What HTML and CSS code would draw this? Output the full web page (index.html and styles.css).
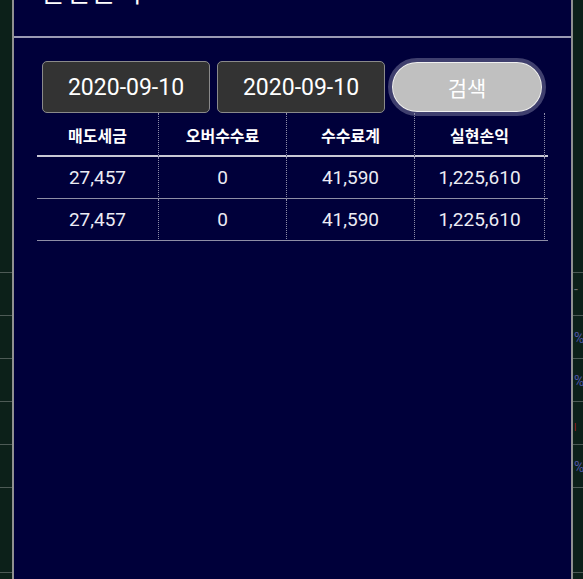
FILE: index.html
```html
<!DOCTYPE html>
<html lang="ko">
<head>
<meta charset="utf-8">
<link rel="stylesheet" href="styles.css">
</head>
<body>
<div class="screen">
  <div class="strip strip-left">
    <div class="cell tall"></div>
    <div class="cell"></div>
    <div class="cell"></div>
    <div class="cell"></div>
    <div class="cell"></div>
    <div class="cell"></div>
    <div class="cell big"></div>
  </div>
  <div class="modal">
    <div class="modal-head">
      <div class="title">실현손익</div>
    </div>
    <div class="modal-body">
      <div class="controls">
        <div class="date">2020-09-10</div>
        <div class="date date2">2020-09-10</div>
        <button class="search">검색</button>
      </div>
      <div class="table">
        <div class="th">매도세금</div>
        <div class="th">오버수수료</div>
        <div class="th">수수료계</div>
        <div class="th">실현손익</div>
        <div class="th end"></div>
        <div class="td">27,457</div>
        <div class="td">0</div>
        <div class="td">41,590</div>
        <div class="td">1,225,610</div>
        <div class="td end"></div>
        <div class="td">27,457</div>
        <div class="td">0</div>
        <div class="td">41,590</div>
        <div class="td">1,225,610</div>
        <div class="td end"></div>
      </div>
    </div>
  </div>
  <div class="strip strip-right">
    <div class="cell tall"></div>
    <div class="cell"><span class="mark grey">-</span></div>
    <div class="cell"><span class="mark">%</span></div>
    <div class="cell"><span class="mark">%</span></div>
    <div class="cell"><span class="mark red">|</span></div>
    <div class="cell"><span class="mark">%</span></div>
    <div class="cell big"></div>
  </div>
</div>
</body>
</html>
```
FILE: styles.css
```css
html, body {
  margin: 0;
  padding: 0;
  background: #0c2019;
  width: 583px;
  height: 579px;
  overflow: hidden;
}
.screen {
  display: flex;
  height: 579px;
}
.strip {
  display: flex;
  flex-direction: column;
  background: #0c2019;
}
.strip-left { width: 12px; }
.strip-right { width: 10px; }
.cell {
  height: 42px;
  border-bottom: 1px solid #4d5a55;
  position: relative;
  overflow: hidden;
}
.cell.tall { height: 272px; }
.cell.big { height: 84px; }
.mark {
  position: absolute;
  left: 1px;
  top: 14px;
  font: 14px "Roboto", sans-serif;
  color: #4f55a8;
}
.mark.grey { color: #6b7070; top: 8px; }
.mark.red { color: #c02020; font-size: 9px; top: 20px; }
.modal {
  flex: 1;
  background: #00003a;
  border-left: 2px solid #8f9090;
  border-right: 2px solid #8f9090;
  display: flex;
  flex-direction: column;
}
.modal-head {
  height: 36px;
  border-bottom: 2px solid #9a9ab4;
  overflow: hidden;
  padding-left: 26px;
}
.title {
  margin-top: -26px;
  font: 26px "Noto Sans CJK KR", sans-serif;
  color: #ffffff;
  line-height: 34px;
  letter-spacing: 2px;
}
.modal-body {
  padding: 20px 0 0 23px;
}
.controls {
  display: flex;
  align-items: center;
  padding-left: 5px;
}
.date {
  box-sizing: border-box;
  width: 168px;
  height: 52px;
  background: #333333;
  border: 1px solid #8a8a8a;
  border-radius: 5px;
  color: #ffffff;
  font: 23px "Roboto", sans-serif;
  display: flex;
  align-items: center;
  justify-content: center;
}
.date2 {
  margin-left: 7px;
  width: 168px;
}
.search {
  box-sizing: border-box;
  margin-left: 3px;
  width: 158px;
  height: 58px;
  border-radius: 29px;
  background: #c0c0c0;
  border: 4px solid #3f3f6e;
  box-shadow: inset 0 0 0 1px #f0f0f0;
  color: #ffffff;
  font: 21px "Noto Sans CJK KR", sans-serif;
  padding: 0;
  display: flex;
  align-items: center;
  justify-content: center;
}
.table {
  display: grid;
  grid-template-columns: 122px 128px 128px 130px 3px;
  width: 511px;
  margin-top: -3px;
}
.th, .td {
  display: flex;
  align-items: center;
  justify-content: center;
  color: #ffffff;
  border-right: 1px dotted #8c8ca8;
}
.th {
  height: 40px;
  padding-top: 2px;
  font: bold 16px "Noto Sans CJK KR", sans-serif;
  border-bottom: 2px solid #c8c8d4;
}
.td {
  height: 41px;
  font: 19px "Roboto", sans-serif;
  color: #ececf4;
  border-bottom: 1px solid #8e8ea6;
}
.th.end, .td.end { border-right: none; }
```
